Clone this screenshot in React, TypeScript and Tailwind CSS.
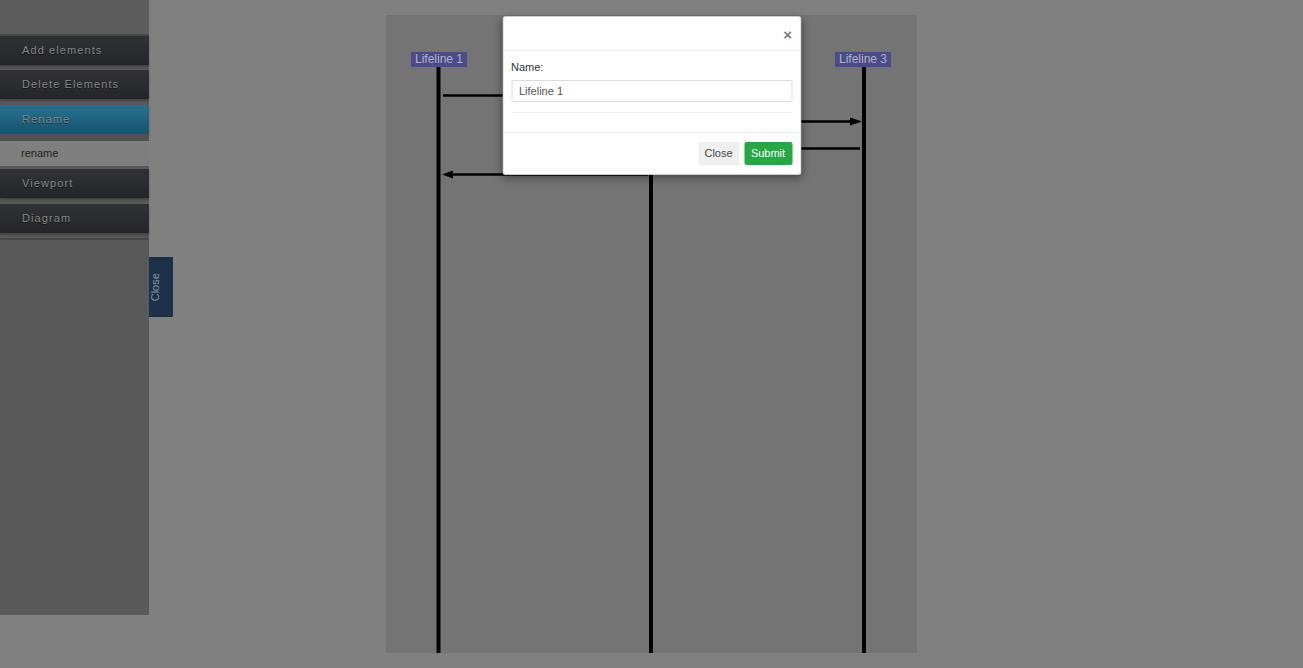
import React from 'react';

const menu = [
  { label: 'Add elements', gapTop: 'mt-0' },
  { label: 'Delete Elements', gapTop: 'mt-[5px]' },
];

function MenuBar({ label, active }: { label: string; active?: boolean }) {
  return (
    <div
      className={
        active
          ? 'h-[29px] flex items-center pl-[22px] bg-gradient-to-b from-[#26738e] to-[#195270] shadow-[0_2px_2px_rgba(0,0,0,0.25)]'
          : 'h-[29px] flex items-center pl-[22px] bg-gradient-to-b from-[#303236] to-[#232529] shadow-[0_2px_2px_rgba(0,0,0,0.25)]'
      }
    >
      <span className="text-[11px] tracking-[1.1px] text-[#868686] [text-shadow:0_1px_0_rgba(0,0,0,0.5)]">
        {label}
      </span>
    </div>
  );
}

function Sidebar() {
  return (
    <aside className="w-[149px] h-[615px] shrink-0 bg-[#595959] flex flex-col">
      <div className="h-[34px] bg-[#5d5d5d]" />
      <div className="h-[2px] bg-[#474747]" />
      {menu.map((m) => (
        <div key={m.label} className={m.gapTop}>
          <MenuBar label={m.label} />
        </div>
      ))}
      <div className="mt-[6px]">
        <MenuBar label="Rename" active />
      </div>
      <div className="h-[7px] bg-[#515151]" />
      <div className="h-[25px] bg-[#7f7f7f] flex items-center pl-[21px] text-[11px] text-[#1e1e1e]">
        rename
      </div>
      <div className="mt-[3px]">
        <MenuBar label="Viewport" />
      </div>
      <div className="mt-[6px]">
        <MenuBar label="Diagram" />
      </div>
      <div className="mt-[5px] h-[2px] bg-[#474747]" />
    </aside>
  );
}

function CloseTab() {
  return (
    <div className="mt-[257px] w-[24px] h-[60px] bg-[#1c3049] flex items-center pl-[1px]">
      <span className="block -rotate-90 text-[11px] text-[#8797a6] -ml-[9px]">Close</span>
    </div>
  );
}

function Lifeline({ label, left }: { label: string; left: string }) {
  return (
    <div
      className={`absolute top-[37px] ${left} h-[15px] px-[4px] bg-[#4b4a8b] text-[12px] leading-[15px] text-[#b3b3c6]`}
    >
      {label}
    </div>
  );
}

function Canvas() {
  return (
    <div className="relative w-[531px] h-[638px] mt-[15px] bg-[#747474] shrink-0">
      <svg className="absolute inset-0" width={531} height={638}>
        <line x1={52.5} y1={52} x2={52.5} y2={638} stroke="#000" strokeWidth={4} />
        <line x1={265} y1={52} x2={265} y2={638} stroke="#000" strokeWidth={4} />
        <line x1={478} y1={52} x2={478} y2={638} stroke="#000" strokeWidth={4} />

        <line x1={57} y1={80.5} x2={250} y2={80.5} stroke="#000" strokeWidth={2.5} />
        <polygon points="262,80.5 250,76.5 250,84.5" fill="#000" />

        <line x1={268} y1={106.5} x2={464} y2={106.5} stroke="#000" strokeWidth={2.5} />
        <polygon points="476,106.5 464,102.5 464,110.5" fill="#000" />

        <line x1={280} y1={133.5} x2={474} y2={133.5} stroke="#000" strokeWidth={2.5} />
        <polygon points="268,133.5 280,129.5 280,137.5" fill="#000" />

        <line x1={67} y1={159.5} x2={262} y2={159.5} stroke="#000" strokeWidth={2.5} />
        <polygon points="56,159.5 67,155.5 67,163.5" fill="#000" />
      </svg>
      <Lifeline label="Lifeline 1" left="left-[25px]" />
      <Lifeline label="Lifeline 2" left="left-[237px]" />
      <Lifeline label="Lifeline 3" left="left-[449px]" />
    </div>
  );
}

function Modal() {
  return (
    <div className="absolute top-[16px] left-1/2 -translate-x-1/2 w-[299px] bg-white rounded-[3px] border border-black/20 shadow-[0_3px_9px_rgba(0,0,0,0.4)] text-[#333]">
      <div className="h-[34px] border-b border-[#eeeeee] flex items-center justify-end pr-[8px]">
        <span className="text-[15px] font-bold text-[#7a7a7a] leading-none mt-[2px]">×</span>
      </div>
      <div className="px-[8px] pt-[10px] pb-[19px]">
        <div className="text-[11px] text-[#333] leading-[13px]">Name:</div>
        <div className="mt-[6px] h-[22px] border border-[#dddddd] rounded-[2px] flex items-center pl-[7px] text-[11px] text-[#555]">
          Lifeline 1
        </div>
        <div className="mt-[10px] h-px bg-[#eeeeee]" />
      </div>
      <div className="border-t border-[#eeeeee] flex justify-end gap-[5px] px-[8px] pt-[9px] pb-[9px]">
        <div className="h-[23px] w-[41px] rounded-[2px] bg-[#efefef] flex items-center justify-center text-[11px] text-[#444]">
          Close
        </div>
        <div className="h-[23px] w-[48px] rounded-[2px] bg-[#28a745] flex items-center justify-center text-[11px] text-white">
          Submit
        </div>
      </div>
    </div>
  );
}

export default function App() {
  return (
    <div className="relative w-[1303px] h-[668px] bg-[#808080] overflow-hidden font-['Liberation_Sans',Arial,sans-serif]">
      <div className="flex items-start">
        <Sidebar />
        <CloseTab />
        <div className="ml-[213px]">
          <Canvas />
        </div>
      </div>
      <Modal />
    </div>
  );
}
